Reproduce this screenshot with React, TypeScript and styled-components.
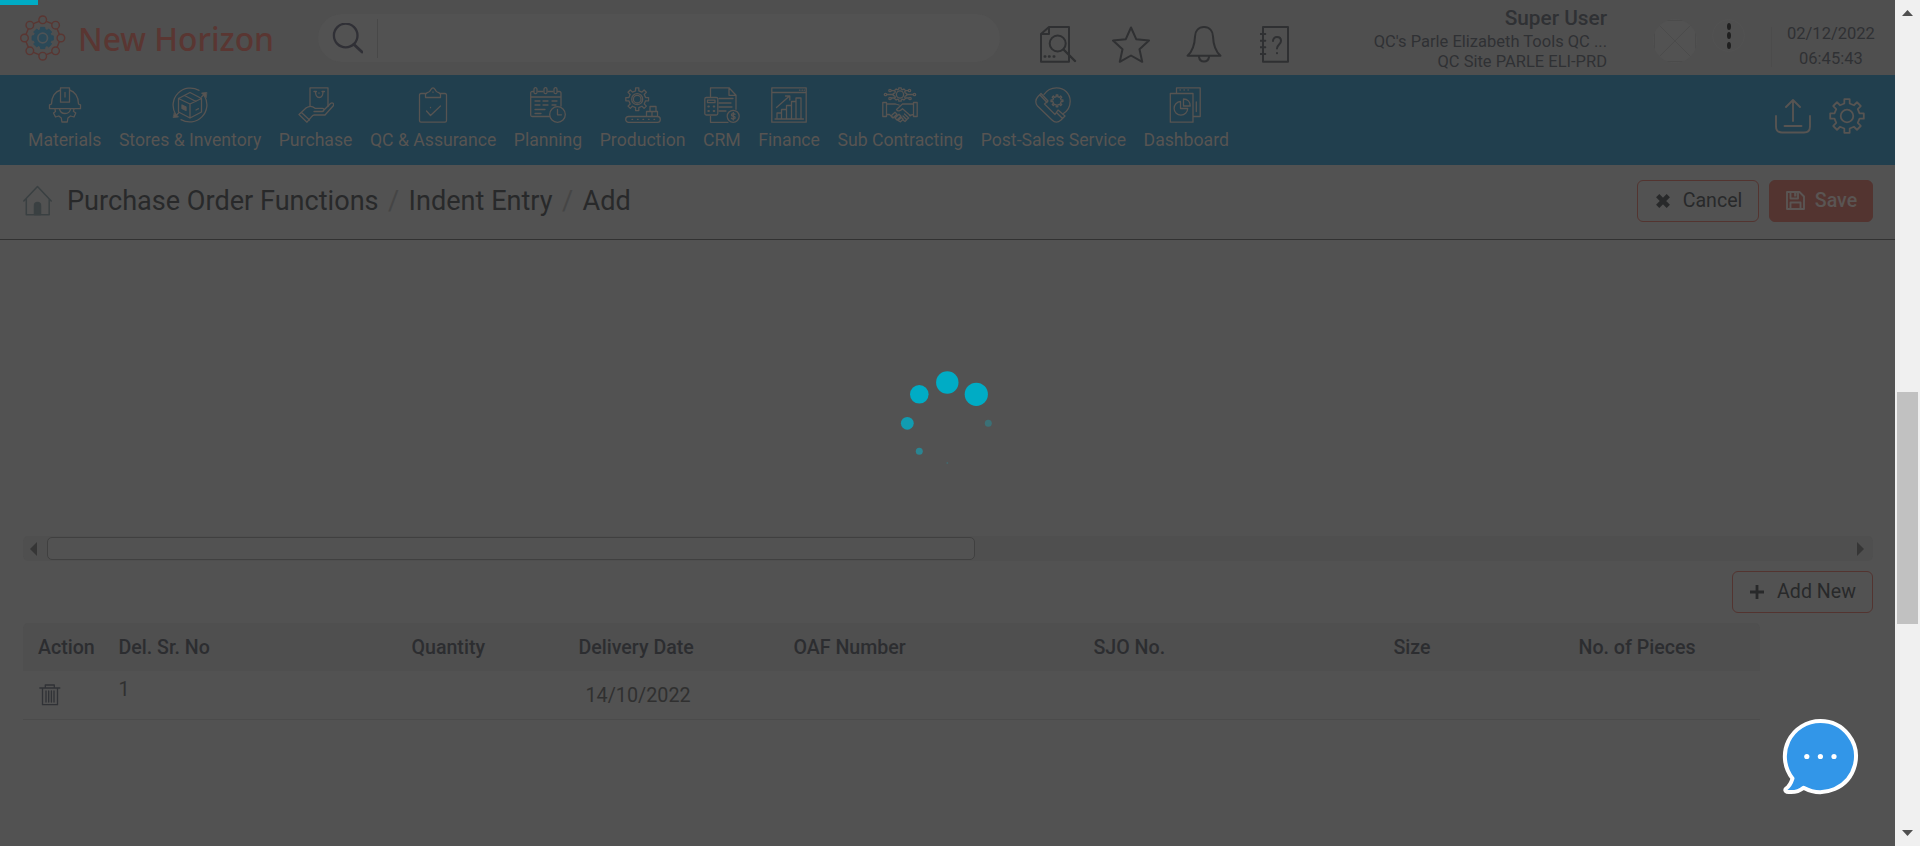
import React from 'react';
import styled, { createGlobalStyle } from 'styled-components';

const color = {
  page: '#525252',
  shade: '#4f4f4f',
  nav: '#213f4e',
  navInk: '#575452',
  red: '#533430',
  brand: '#5a3632',
  ink: '#2c2d30',
  text: '#2f3134',
  heading: '#28292a',
  cyan: '#00acc5',
};

const GlobalStyle = createGlobalStyle`
  * { box-sizing: border-box; }
  body { margin: 0; background: ${color.page}; overflow: hidden; }
`;

const Screen = styled.div`
  display: flex;
  height: 846px;
  width: 1920px;
  font-family: Roboto, "Liberation Sans", sans-serif;
  color: ${color.text};
  background: ${color.page};
`;

const Page = styled.div`
  position: relative;
  flex: 1;
  display: flex;
  flex-direction: column;
`;

const Header = styled.header`
  display: flex;
  height: 75px;
  background: ${color.shade};
  padding-left: 20px;
`;

const Brand = styled.div`
  display: flex;
  align-items: center;
  width: 298px;
  gap: 12px;
  padding-top: 1px;
  font: 500 31.8px "Noto Sans", sans-serif;
  color: ${color.brand};
  white-space: nowrap;
`;

const SearchBar = styled.div`
  display: flex;
  align-items: center;
  width: 682px;
  height: 48px;
  margin-top: 14px;
  padding-left: 14px;
  border-radius: 24px;
  background: ${color.page};
`;

const SearchDivider = styled.span`
  width: 1px;
  height: 39px;
  margin-left: 14px;
  background: #484848;
`;

const QuickLinks = styled.div`
  display: flex;
  gap: 34px;
  width: 260px;
  margin: 24px 0 0 38px;
`;

const UserInfo = styled.div`
  width: 309px;
  padding-top: 4px;
  text-align: right;
  white-space: nowrap;
  font-size: 16.5px;
  line-height: 20px;
`;

const UserName = styled.div`
  font-size: 20.8px;
  font-weight: 500;
  line-height: 28px;
`;

const Avatar = styled.div`
  width: 44px;
  height: 44px;
  margin: 19px 0 0 46px;
  border-radius: 50%;
  background: #525252;
`;

const MoreButton = styled.div`
  display: flex;
  flex-direction: column;
  align-items: center;
  justify-content: center;
  gap: 2.5px;
  width: 33px;
  height: 33px;
  margin: 19px 0 0 15px;
  border: 1px solid #525252;
  border-radius: 50%;
`;

const MoreDot = styled.i`
  width: 4px;
  height: 7px;
  border-radius: 50%;
  background: #202020;
`;

const Clock = styled.div`
  height: 40px;
  margin: 27px 0 0 26px;
  padding-left: 15px;
  border-left: 1px solid #4b4b4b;
  text-align: center;
  font-size: 16.5px;
  line-height: 25px;
`;

const ClockText = styled.div`
  margin-top: -6px;
`;

const Nav = styled.nav`
  display: flex;
  height: 90px;
  padding: 12px 30px 0 28px;
  background: ${color.nav};
  color: ${color.navInk};
`;

const NavList = styled.div`
  display: flex;
  flex: 1;
  gap: 17.5px;
`;

const NavItem = styled.div`
  display: flex;
  flex-direction: column;
  align-items: center;
  gap: 7px;
  font-size: 17.65px;
  line-height: 20px;
  white-space: nowrap;
`;

const NavTools = styled.div`
  display: flex;
  gap: 18px;
  padding-top: 11px;
`;

const TitleBar = styled.div`
  display: flex;
  align-items: center;
  height: 75px;
  padding: 0 22px 2px 23px;
  border-bottom: 1px solid #323232;
`;

const Crumbs = styled.div`
  display: flex;
  flex: 1;
  margin-left: 15px;
  font-size: 27.1px;
  line-height: 32px;
  color: ${color.heading};
`;

const Slash = styled.span`
  width: 30px;
  text-align: center;
  color: #454545;
`;

const Button = styled.button<{ $filled?: boolean; $width: number; $gap: number }>`
  display: flex;
  align-items: center;
  justify-content: center;
  gap: ${(p) => p.$gap}px;
  width: ${(p) => p.$width}px;
  height: 42px;
  margin-left: 10px;
  padding: 0 0 1px 1px;
  border: 1px solid ${color.red};
  border-radius: 6px;
  background: ${(p) => (p.$filled ? color.red : 'transparent')};
  color: ${(p) => (p.$filled ? '#5a5553' : color.heading)};
  font: ${(p) => (p.$filled ? 500 : 400)} 19.6px Roboto, sans-serif;
  white-space: nowrap;
`;

const Content = styled.main`
  display: flex;
  flex-direction: column;
  padding: 296px 22px 0 23px;
`;

const GridScroll = styled.div`
  display: flex;
  align-items: center;
  height: 25px;
  padding: 0 9px 0 7px;
  border-radius: 5px;
  background: ${color.shade};
`;

const GridThumb = styled.div`
  width: 928px;
  height: 23px;
  margin-left: 10px;
  margin-right: auto;
  border: 1px solid #404040;
  border-radius: 5px;
  background: ${color.page};
`;

const Actions = styled.div`
  display: flex;
  justify-content: flex-end;
  padding: 10px 0;
`;

const Row = styled.div<{ $head?: boolean }>`
  display: grid;
  grid-template-columns: 80.5px 293px 167px 215px 300px 300px 185px 196.5px;
  width: 1737px;
  height: ${(p) => (p.$head ? 48 : 49)}px;
  font-size: ${(p) => (p.$head ? 19.6 : 19.75)}px;
  font-weight: ${(p) => (p.$head ? 500 : 400)};
  color: ${(p) => (p.$head ? color.ink : '#303030')};
  background: ${(p) => (p.$head ? color.shade : 'transparent')};
  border-bottom: ${(p) => (p.$head ? '0' : '1px solid #4b4b4b')};
  border-radius: ${(p) => (p.$head ? '5px 5px 0 0' : '0')};
`;

const Cell = styled.div<{ $indent?: number; $lift?: number }>`
  display: flex;
  align-items: center;
  padding: 0 0 ${(p) => p.$lift ?? 0}px ${(p) => 15 + (p.$indent ?? 0)}px;
`;

const Loader = styled.svg`
  position: absolute;
  left: 895px;
  top: 371px;
`;

const Progress = styled.div`
  position: absolute;
  left: 0;
  top: 0;
  width: 38px;
  height: 5px;
  background: ${color.cyan};
`;

const ChatButton = styled.svg`
  position: absolute;
  left: 1782px;
  top: 718px;
`;

const ScrollBar = styled.div`
  display: flex;
  flex-direction: column;
  align-items: center;
  width: 25px;
  padding: 10px 0;
  background: #f0f0f0;
`;

const ScrollThumb = styled.div`
  width: 21px;
  height: 232px;
  margin: 376px 0 auto;
  background: #c1c1c1;
`;

/* Outline of a cog: square teeth evenly spaced around a centre. */
function cog(cx: number, cy: number, outer: number, inner: number, teeth = 8, width = 0.4) {
  const pts: string[] = [];
  const step = (Math.PI * 2) / teeth;
  for (let i = 0; i < teeth; i++) {
    const a = i * step - Math.PI / 2;
    const wo = (step * width) / 2;
    const wi = (step * width * 1.35) / 2;
    [[inner, a - wi], [outer, a - wo], [outer, a + wo], [inner, a + wi]].forEach(([r, t]) =>
      pts.push(`${(cx + r * Math.cos(t)).toFixed(2)} ${(cy + r * Math.sin(t)).toFixed(2)}`),
    );
  }
  return `M${pts.join('L')}Z`;
}

type IconProps = { children: React.ReactNode; w?: number; h?: number; stroke?: string; sw?: number };
const Icon = ({ children, w = 36, h = 36, stroke = color.navInk, sw = 1.3 }: IconProps) => (
  <svg width={w} height={h} viewBox={`0 0 ${w} ${h}`} fill="none" stroke={stroke} strokeWidth={sw} strokeLinejoin="round" strokeLinecap="round">
    {children}
  </svg>
);

const Logo = () => {
  const nodes = Array.from({ length: 8 }, (_, i) => {
    const a = (i * Math.PI) / 4;
    return [22.7 + 18.2 * Math.cos(a), 23 + 18.2 * Math.sin(a)];
  });
  return (
    <Icon w={46} h={46} stroke={color.brand} sw={1.4}>
      <polygon points={nodes.map((n) => n.join(',')).join(' ')} />
      {nodes.map(([x, y], i) => (
        <circle key={i} cx={x} cy={y} r={3.8} fill={color.shade} />
      ))}
      <path d={cog(22.7, 23, 10.8, 8.8, 8, 0.5)} fill="#2b4958" stroke="#2b4958" strokeWidth={1} />
      <circle cx={22.7} cy={23} r={4.8} stroke="#4e5356" strokeWidth={1.7} />
    </Icon>
  );
};

const navItems: { label: string; icon: React.ReactNode }[] = [
  {
    label: 'Materials',
    icon: (
      <>
        <path d="M4.500 17C4.500 10 8 4.500 13.500 3M31.500 17C31.500 10 28 4.500 22.500 3M13.500 .8h9v14.400h-9zM4.500 17l-2 .8v3.900h31v-3.900l-2-.8M18 5.500v4.500" />
        <path d="M12.500 22c.6 3 2.600 4.500 5.500 4.500s5-1.500 5.500-4.500M8 22c.2 1 .1 1.500.5 2.500l-2 1.500 2 4 3.300-1 2.500 2 .6 4h5.400l.6-4 2.600-2 3.500 1 1.800-4-2.400-1.800c.4-1 .4-1.500.5-2.200" />
      </>
    ),
  },
  {
    label: 'Stores & Inventory',
    icon: (
      <>
        <path d="M27 3.400A17.200 17.200 0 0 0 3.500 27M9 32.600A17.200 17.200 0 0 0 32.500 9M29.500 10L33 6.500M3 29.500L6.500 26" />
        <path d="M18 5.500l11.500 6v13.500L18 31 6.500 25V11.500zM6.500 11.500L18 17l11.500-5.500M18 17v14M12.500 8.500l11.500 6" />
        <path d="M10 18l4 2v3.500l-4-2zM24 23l2.500-1.300" fill={color.navInk} />
        <path d="M34.500 5.500l-5 .5 4.500 4.500zM1.500 30.500l5-.5L2.500 26z" fill={color.navInk} strokeWidth={0.8} />
      </>
    ),
  },
  {
    label: 'Purchase',
    icon: (
      <>
        <path d="M12 19.500V.8h18v18.700M16 4.500h2.500M24 4.500h2.500M17.500 4.500c0 8 7.500 8 7.500 0M21 6v.2" />
        <path d="M8 21c4-3 7-1.500 9 .3h7.500c2 0 2 3 0 3.200H16M24.500 24.500L32.500 16.500c2-1.500 3.800.3 2.800 2.200L27 28H16c-1 0-1.600.5-3 2.400L9 35.200 1 27.500 8 21M3.500 25.500l8 7.500" />
      </>
    ),
  },
  {
    label: 'QC & Assurance',
    icon: (
      <path d="M11.500 6.500H6c-1 0-1.500.5-1.500 1.500v25.500c0 1.200.5 1.700 1.500 1.700h24c1 0 1.500-.5 1.500-1.700V8c0-1-.5-1.500-1.500-1.500h-5.500M10.500 10.500V7c0-1 3.500-1.500 4.500-3s1.500-3.200 3-3.200 2 1.700 3 3.200 4.500 2 4.500 3v3.500zM18 5v.3M11.500 24l4 4.500 10-9.500M15.500 20.500v.2" />
    ),
  },
  {
    label: 'Planning',
    icon: (
      <>
        <path d="M3.500 4.500H2.200c-1 0-1.500.500-1.500 1.500v22c0 1 .5 1.500 1.500 1.500h17.300M31 19V6c0-1-.500-1.500-1.500-1.500h-2M8 4.500h5M18 4.500h5M.7 10h30.300" />
        <rect x="4" y=".7" width="3" height="6" rx="1.500" />
        <rect x="14" y=".7" width="3" height="6" rx="1.500" />
        <rect x="24" y=".7" width="3" height="6" rx="1.500" />
        <path d="M5 14h5M13 14h5M22 14h5M5 18h5M13 18h5M22 18h4M5 22.500h10M5 26.500h6" />
        <circle cx="27.500" cy="27.500" r="7.800" />
        <path d="M27.500 22.500v5.300h4" />
      </>
    ),
  },
  {
    label: 'Production',
    icon: (
      <>
        <path d={cog(12.2, 12.2, 11.5, 8.5, 8, 0.36)} />
        <circle cx="12.200" cy="12.200" r="5.500" />
        <circle cx="12.200" cy="12.200" r="3.800" />
        <rect x=".7" y="29.500" width="34.600" height="5.800" rx="2.900" />
        <path d="M7 32.400h.6M12.500 32.400h.6M18 32.400h.6M23.500 32.400h.6M29 32.400h.6M21.500 29v-4.500h11v4.500M27 24.500v4.500M25 24.500v-5h6v5" />
      </>
    ),
  },
  {
    label: 'CRM',
    icon: (
      <>
        <path d="M6.500 9.500V.8H25l7 7.500v14M25 .8v7.500h7M6.500 29.500v5.800H24M15 11.500h14M15 16h12M15 20h13M15 24h7" />
        <rect x=".8" y="10.500" width="13" height="17.500" rx="1.500" />
        <rect x="3.500" y="13.200" width="7.500" height="2.500" />
        <path d="M4.200 19.500h.8M9.600 19.500h.8M4.200 24h.8M9.600 24h.8" strokeWidth={1.8} />
        <circle cx="29.200" cy="29.300" r="6" />
        <path d="M31 27.300c-1-1-3.600-.9-3.600.6 0 1.700 3.800 1 3.800 2.800 0 1.500-2.700 1.700-3.800.5M29.300 25.500v7.500" />
      </>
    ),
  },
  {
    label: 'Finance',
    icon: (
      <path d="M.8.800h34.400v34.400H.8zM.8 5.500h34.400M28.500 3.200h.5M31 3.200h.5M33.200 3.200h.2M4 32h28.500M6 32v-6h4.500v6M10.500 26v-3.500h5V32M15.500 22.500v-4h5V32M20.500 18.500v-4h4.500V32M25 14.500v-3.500h5V32M5.500 20.500L18.500 9M14.500 9h4.300v4" />
    ),
  },
  {
    label: 'Sub Contracting',
    icon: (
      <>
        <path d={cog(18, 7.5, 6.8, 5.5, 8, 0.45)} />
        <circle cx="18" cy="7.500" r="3.600" />
        <circle cx="8" cy="3.500" r="1.200" />
        <circle cx="3.500" cy="7.500" r="1.200" />
        <circle cx="8" cy="11.500" r="1.200" />
        <circle cx="27.500" cy="3.500" r="1.200" />
        <circle cx="32.500" cy="7.500" r="1.200" />
        <circle cx="28" cy="11.500" r="1.200" />
        <path d="M9.500 3.700h3M5 7.500h5.500M9.500 11h3M23.500 3.700h2.500M25.500 7.500H31M24 11h2.500M.8 15.500h3.700v14H.8zM31.500 15.500h3.700v14h-3.700zM4.500 17h9l3.500 1M31.500 17H20.500l-6 5.500c1 2.500 4 1.500 6-.8l8 7M4.500 27.500h3l2.500 2.500M31.500 27.500l-4 1" />
        <path d="M10 28l3-2.700 2 2-4 3.700-1.500-1.700zM13 31l4-3.700 2 2-4 3.700zM16 33.500l3.500-3 1.700 1.700-2.700 2.600zM21 33l2 1.500 1.700-1.700L21 29M24.700 32.500l2-1.500L22.500 27" />
      </>
    ),
  },
  {
    label: 'Post-Sales Service',
    icon: (
      <>
        <path d="M9 7.500C12 3 16.500.8 21.500.8c8 0 13.700 6 13.700 13.500 0 6-3.200 10.200-7.200 12.500" />
        <path d={cog(22, 13.8, 6, 4.2, 8, 0.35)} />
        <path d="M3 9.500l3-3 7 7.500-3.500 3L20 27.500l3-4.500 7 6-4 4c-3 2.800-6.500 2.500-9 0L2.500 19C.200 16.500.2 12.500 3 9.500zM5 8l7 7.500M21.500 25.500l6 6" />
      </>
    ),
  },
  {
    label: 'Dashboard',
    icon: (
      <>
        <path d="M8.500 6V.800h23.700V29.500H25.500M2.300 6.500h22.700v28.700H2.300zM12 3h.3M16 3h.3M20 3h.3M28.300 15v9.500" />
        <path d="M12.500 14.500a6.800 6.800 0 1 0 7.200 7h-7.200zM15.500 12v7h6.700c0-4-2.600-7-6.700-7z" />
      </>
    ),
  },
];

const headings = ['Action', 'Del. Sr. No', 'Quantity', 'Delivery Date', 'OAF Number', 'SJO No.', 'Size', 'No. of Pieces'];

export default function App() {
  return (
    <Screen>
      <GlobalStyle />
      <Page>
        <Header>
          <Brand>
            <Logo />
            New Horizon
          </Brand>
          <SearchBar>
            <Icon w={31} h={31} stroke="#303036" sw={2.3}>
              <circle cx="13.700" cy="12.500" r="11.800" />
              <path d="M22 21.500l8 7.500" strokeWidth={2.8} />
            </Icon>
            <SearchDivider />
          </SearchBar>
          <QuickLinks>
            <Icon w={40} h={40} stroke="#2f3032" sw={2}>
              <path d="M11 3h20v34.700H3V10zM11 3v7H3" />
              <circle cx="19.700" cy="19.500" r="8" />
              <path d="M25.500 25.500L37 37M6.700 32.500h.6M11 32.500h.6M15.700 32.500h.6" strokeWidth={2.4} />
            </Icon>
            <Icon w={40} h={40} stroke="#2f3032" sw={2}>
              <path d="M19 3.500l5.200 11.700 12.800 1.400-9.500 8.700 2.700 12.500L19 31.500 7.800 37.800l2.700-12.500L1 16.600l12.800-1.400z" />
            </Icon>
            <Icon w={40} h={40} stroke="#2f3032" sw={2}>
              <path d="M18 3c-5.500 0-8.800 4-9 9.500-.3 8-1.500 14-7.500 19.200h33C28.500 26.500 27.300 20.500 27 12.500 26.800 7 23.500 3 18 3zM13 33c.5 3 2 4.500 5 4.500s4.500-1.500 5-4.500" />
            </Icon>
            <Icon w={38} h={40} stroke="#2f3032" sw={2}>
              <path d="M2 3h25v34.700H2zM-.7 10h5M-.7 16.700h5M-.7 23.300h5M-.7 30h5M12 17c0-5.500 8-5 8 0 0 3.500-4 3.500-4 7.500M16 29v.3" transform="translate(1 0)" />
            </Icon>
          </QuickLinks>
          <UserInfo>
            <UserName>Super User</UserName>
            <div>QC's Parle Elizabeth Tools QC ...</div>
            <div>QC Site PARLE ELI-PRD</div>
          </UserInfo>
          <Avatar>
            <Icon w={44} h={44} stroke="#4b4b4b" sw={1}>
              <path d="M7 7l30 30M37 7L7 37M15 1.500h14M15 42.500h14M1.500 15v14M42.500 15v14" />
            </Icon>
          </Avatar>
          <MoreButton>
            <MoreDot />
            <MoreDot />
            <MoreDot />
          </MoreButton>
          <Clock>
            <ClockText>02/12/2022</ClockText>
            <div>06:45:43</div>
          </Clock>
        </Header>

        <Nav>
          <NavList>
            {navItems.map((item) => (
              <NavItem key={item.label}>
                <Icon>{item.icon}</Icon>
                {item.label}
              </NavItem>
            ))}
          </NavList>
          <NavTools>
            <Icon sw={1.9}>
              <path d="M1 18v10.500c0 4 2 6 6 6h22c4 0 6-2 6-6V18M18 23V2M11 9l7-7 7 7M9.500 28h17" />
            </Icon>
            <Icon sw={1.8}>
              <path d={cog(18, 18, 17, 12.8, 8, 0.4)} />
              <circle cx="18" cy="18" r="6.300" />
            </Icon>
          </NavTools>
        </Nav>

        <TitleBar>
          <Icon w={29} h={32} stroke="#3a4042" sw={1.5}>
            <path d="M.8 16L14.500 1.500 28.200 16M3.300 14v15.800h22.900V14" />
            <path d="M11.500 29.500V20.500c0-4 6-4 6 0v9z" fill="#3a4042" />
          </Icon>
          <Crumbs>
            Purchase Order Functions<Slash>/</Slash>Indent Entry<Slash>/</Slash>Add
          </Crumbs>
          <Button $width={122} $gap={12}>
            <Icon w={16} h={16} stroke={color.heading} sw={4.6}>
              <path d="M2.700 2.700l10.600 10.600M13.300 2.700L2.700 13.300" strokeLinecap="butt" />
            </Icon>
            Cancel
          </Button>
          <Button $filled $width={104} $gap={10}>
            <Icon w={19} h={19} stroke="#5a5553" sw={1.9}>
              <path d="M1 1h12.500l4.500 4.500V18H1zM4.500 18v-6.500h10V18M4.500 1v6.500h7.500V1" />
              <path d="M9.300 2v3.500" strokeWidth={2.4} strokeLinecap="butt" />
            </Icon>
            Save
          </Button>
        </TitleBar>

        <Content>
          <GridScroll>
            <svg width="7" height="14">
              <path d="M7 0v14L0 7z" fill="#363636" />
            </svg>
            <GridThumb />
            <svg width="7" height="14">
              <path d="M0 0v14l7-7z" fill="#363636" />
            </svg>
          </GridScroll>
          <Actions>
            <Button $width={141} $gap={13}>
              <Icon w={14} h={14} stroke={color.heading} sw={2.8}>
                <path d="M7 0v14M0 7h14" strokeLinecap="butt" />
              </Icon>
              Add New
            </Button>
          </Actions>
          <Row $head>
            {headings.map((h) => (
              <Cell key={h}>{h}</Cell>
            ))}
          </Row>
          <Row>
            <Cell $indent={1}>
              <Icon w={22} h={22} stroke="#303236" sw={1.3}>
                <path d="M.8 4h20M3.500 4v16.700h15V4M6.300 3.500V1h9v2.500M7 7v11M9.700 7v11M12.400 7v11M15 7v11" />
              </Icon>
            </Cell>
            <Cell $lift={12}>1</Cell>
            <Cell />
            <Cell $indent={7}>14/10/2022</Cell>
          </Row>
        </Content>

        <Progress />
        <Loader width="104" height="104">
          <g fill={color.cyan}>
            <circle cx="52.300" cy="11.500" r="11.200" />
            <circle cx="81.300" cy="23.300" r="11.600" />
            <circle cx="24.300" cy="23.300" r="9.300" />
            <circle cx="12.300" cy="52.300" r="6.400" fill="#119cb1" />
            <circle cx="24.300" cy="80.200" r="3.500" fill="#2a8592" />
            <circle cx="93.300" cy="52.300" r="3.500" fill="#3b7076" />
            <circle cx="52.300" cy="92" r="1" fill="#45666a" />
          </g>
        </Loader>
        <ChatButton width="78" height="78">
          <path
            d="M38.500 3A35.500 35.500 0 1 1 21.500 69.700C17 73.500 11 74.800 4.500 73.700 3 73.200 3 71.700 4 70.700 7 68.500 9 65.500 10.500 60.500A35.500 35.500 0 0 1 38.500 3z"
            fill="#3296e8"
            stroke="#fff"
            strokeWidth="4"
            strokeLinejoin="round"
          />
          <g fill="#fff">
            <circle cx="24.800" cy="38.500" r="2.600" />
            <circle cx="38.400" cy="38.500" r="2.600" />
            <circle cx="52" cy="38.500" r="2.600" />
          </g>
        </ChatButton>
      </Page>
      <ScrollBar>
        <svg width="11" height="6">
          <path d="M0 6L5.500 0 11 6z" fill="#505050" />
        </svg>
        <ScrollThumb />
        <svg width="11" height="6">
          <path d="M0 0h11L5.500 6z" fill="#505050" />
        </svg>
      </ScrollBar>
    </Screen>
  );
}
